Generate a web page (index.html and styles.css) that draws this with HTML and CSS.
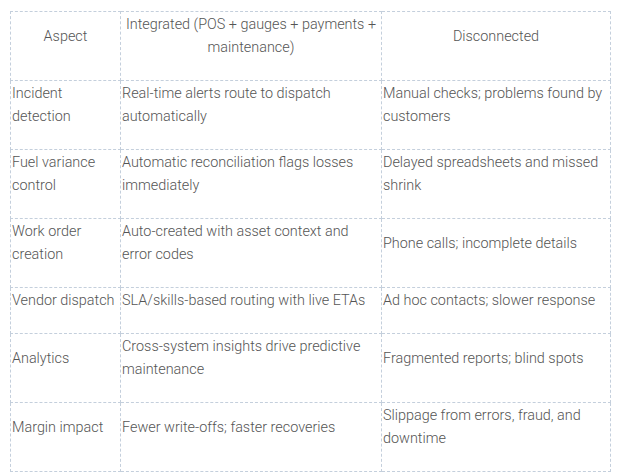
FILE: index.html
```html
<!DOCTYPE html>
<html lang="en">
<head>
<meta charset="utf-8">
<title>Comparison</title>
<link rel="stylesheet" href="styles.css">
</head>
<body>
<table class="cmp">
  <colgroup>
    <col class="c1">
    <col class="c2">
    <col class="c3">
  </colgroup>
  <thead>
    <tr>
      <th>Aspect</th>
      <th>Integrated (POS + gauges + payments + maintenance)</th>
      <th>Disconnected</th>
    </tr>
  </thead>
  <tbody>
    <tr>
      <td>Incident detection</td>
      <td>Real-time alerts route to dispatch automatically</td>
      <td>Manual checks; problems found by customers</td>
    </tr>
    <tr>
      <td>Fuel variance control</td>
      <td>Automatic reconciliation flags losses immediately</td>
      <td>Delayed spreadsheets and missed shrink</td>
    </tr>
    <tr>
      <td>Work order creation</td>
      <td>Auto-created with asset context and error codes</td>
      <td>Phone calls; incomplete details</td>
    </tr>
    <tr>
      <td>Vendor dispatch</td>
      <td>SLA/skills-based routing with live ETAs</td>
      <td>Ad hoc contacts; slower response</td>
    </tr>
    <tr>
      <td>Analytics</td>
      <td>Cross-system insights drive predictive maintenance</td>
      <td>Fragmented reports; blind spots</td>
    </tr>
    <tr>
      <td>Margin impact</td>
      <td>Fewer write-offs; faster recoveries</td>
      <td>Slippage from errors, fraud, and downtime</td>
    </tr>
  </tbody>
</table>
</body>
</html>
```

FILE: styles.css
```css
html, body {
  background: #ffffff;
}
body {
  margin: 11px 0 0 10px;
  font-family: Roboto, "Liberation Sans", sans-serif;
  font-weight: 300;
  font-size: 14.4px;
  color: #555555;
}
.cmp {
  width: 600px;
  border-collapse: collapse;
  table-layout: fixed;
}
.c1 { width: 110px; }
.c2 { width: 261px; }
.c3 { width: 229px; }
.cmp th,
.cmp td {
  border: 1px dashed #c4cfdc;
  padding: 1px 1px 21px 1px;
  line-height: 23px;
  vertical-align: middle;
  text-align: left;
}
.cmp th {
  font-weight: 300;
  text-align: center;
}
```
